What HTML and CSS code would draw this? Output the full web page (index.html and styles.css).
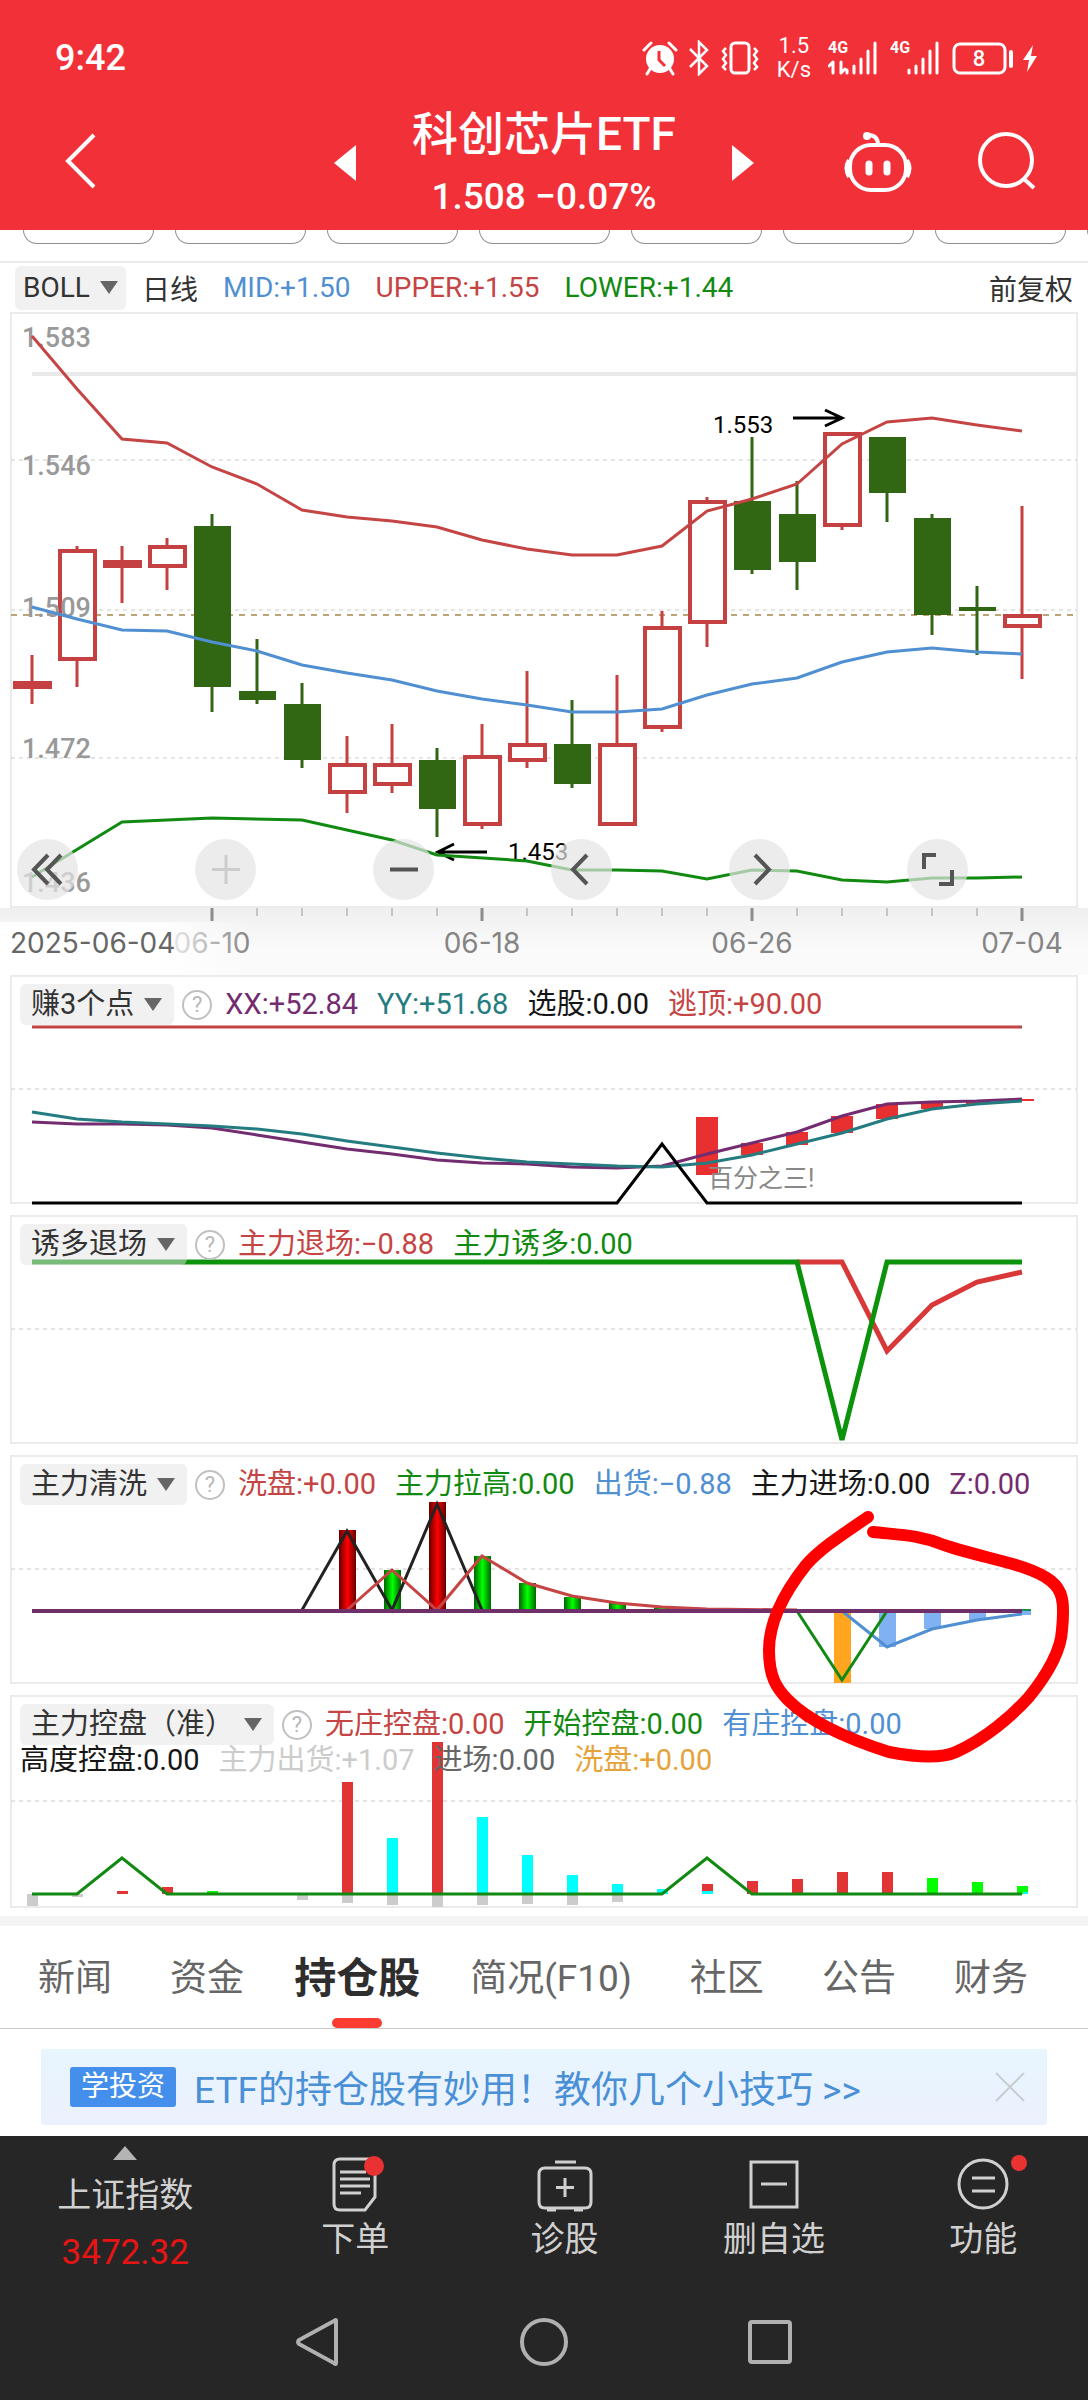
FILE: index.html
```html
<!DOCTYPE html>
<html lang="zh-CN">
<head>
<meta charset="utf-8">
<meta name="viewport" content="width=device-width, initial-scale=1">
<title>科创芯片ETF</title>
<link rel="stylesheet" href="styles.css">
</head>
<body>
<header class="top">
  <div class="status">
    <span class="clock">9:42</span>
    <div class="status-icons">
      <svg width="36" height="36" viewBox="0 0 36 36"><circle cx="18" cy="19" r="14" fill="#fff"/><path d="M2 10l7-7M34 10l-7-7M8 29l-3 5M28 29l3 5" stroke="#fff" stroke-width="3" stroke-linecap="round"/><path d="M17 11v9l6 6" fill="none" stroke="#f23038" stroke-width="3"/></svg>
      <svg width="22" height="36" viewBox="0 0 22 36"><path d="M2 9l17 17-8 8V2l8 8L2 27" fill="none" stroke="#fff" stroke-width="2.5"/></svg>
      <svg width="40" height="36" viewBox="0 0 40 36"><rect x="11" y="3" width="18" height="30" rx="4" fill="none" stroke="#fff" stroke-width="3"/><path d="M6 8l-3 3 3 4-3 4 3 4-3 4 3 3M34 8l3 3-3 4 3 4-3 4 3 4-3 3" fill="none" stroke="#fff" stroke-width="2.5"/></svg>
      <span class="speed"><span>1.5</span><span>K/s</span></span>
      <svg class="signal" width="52" height="40" viewBox="0 -4 52 40"><text x="0" y="13">4G</text><path d="M5 22v11M1 26l4-4M13 22v11M13 33l4-4M19 30v3M26 26v7M33 19v14M40 11v22M47 3v30" fill="none" stroke="#fff" stroke-width="3" stroke-linecap="round"/></svg>
      <svg class="signal" width="52" height="40" viewBox="0 -4 52 40"><text x="0" y="13">4G</text><path d="M19 30v3M26 26v7M33 19v14M40 11v22M47 3v30" fill="none" stroke="#fff" stroke-width="3" stroke-linecap="round"/></svg>
      <svg class="battery" width="86" height="36" viewBox="0 0 86 36"><rect x="2" y="4" width="51" height="29" rx="6" fill="none" stroke="#fff" stroke-width="3"/><path d="M59 12v14" stroke="#fff" stroke-width="4" stroke-linecap="round"/><text x="27" y="26" text-anchor="middle">8</text><path d="M81 5L71 20h6l-2 12 10-16h-6z" fill="#fff"/></svg>
    </div>
  </div>
  <nav class="titlebar">
    <button class="icon-btn back" aria-label="返回"><svg width="56" height="60" viewBox="0 0 56 60"><path d="M42 2L16 28l26 26" fill="none" stroke="#fff" stroke-width="4"/></svg></button>
    <div class="switcher">
      <button class="icon-btn" aria-label="上一只"><svg width="22" height="36" viewBox="0 0 22 36"><path d="M22 0v36L0 18z" fill="#fff"/></svg></button>
      <div class="heading"><h1>科创芯片ETF</h1><p>1.508 −0.07%</p></div>
      <button class="icon-btn" aria-label="下一只"><svg width="22" height="36" viewBox="0 0 22 36"><path d="M0 0v36l22-18z" fill="#fff"/></svg></button>
    </div>
    <div class="actions">
      <button class="icon-btn" aria-label="智能助手"><svg width="68" height="66" viewBox="0 0 68 66" fill="none" stroke="#fff"><rect x="6" y="15" width="56" height="45" rx="21" stroke-width="4"/><path d="M5 30q-5 8 0 17M63 30q5 8 0 17" stroke-width="4"/><path d="M34 15q0-10-10-10" stroke-width="4"/><circle cx="23" cy="6" r="4" fill="#fff" stroke="none"/><path d="M25 34v8M43 34v8" stroke-width="7" stroke-linecap="round"/></svg></button>
      <button class="icon-btn" aria-label="搜索"><svg width="58" height="64" viewBox="0 0 58 64"><circle cx="28" cy="29" r="26" fill="none" stroke="#fff" stroke-width="4"/><path d="M46 48l10 9" stroke="#fff" stroke-width="4"/></svg></button>
    </div>
  </nav>
</header>

<main>
  <div class="chips"><span></span><span></span><span></span><span></span><span></span><span></span><span></span><span></span></div>
  <div class="indicator">
    <button class="picker">BOLL<i class="caret"></i></button>
    <span>日线</span><span class="blue">MID:+1.50</span><span class="red">UPPER:+1.55</span><span class="green">LOWER:+1.44</span>
    <span class="adjust">前复权</span>
  </div>

  <section class="panel">
    <svg class="plot" viewBox="0 312 1088 663">
      <defs>
        <linearGradient id="axis" x2="0" y2="1"><stop offset="0" stop-color="#efefef"/><stop offset=".6" stop-color="#fafafa"/></linearGradient>
        <linearGradient id="fade"><stop offset="0" stop-color="#fff"/><stop offset=".66" stop-color="#fff" stop-opacity=".9"/><stop offset="1" stop-color="#fff" stop-opacity="0"/></linearGradient>
      </defs>
      <rect x="0" y="908" width="1088" height="67" fill="url(#axis)"/>
      <rect class="frame" x="11" y="313" width="1066" height="594"/>
      <path class="grid" d="M11 460H1077M11 610H1077M11 758H1077"/>
      <path d="M32 374H1077" stroke="#e9e9e9" stroke-width="4"/>
      <path d="M11 615H1077" stroke="#bda477" stroke-width="2" stroke-dasharray="6 6"/>
      <g class="up">
        <path d="M32 655V704M77 546V687M122 546V603M167 538V590M347 736V813M392 724V793M482 724V829M527 671V768M617 675V750M662 611V732M707 497V647M842 433V530M1022 506V679"/>
        <rect x="15" y="683" width="35" height="4"/><rect x="105" y="562" width="35" height="4"/>
        <rect x="60" y="551" width="35" height="108"/><rect x="150" y="547" width="35" height="19"/><rect x="330" y="765" width="35" height="27"/><rect x="375" y="765" width="35" height="19"/><rect x="465" y="757" width="35" height="67"/><rect x="510" y="745" width="35" height="15"/><rect x="600" y="745" width="35" height="79"/><rect x="645" y="628" width="35" height="99"/><rect x="690" y="502" width="35" height="120"/><rect x="825" y="434" width="35" height="91"/><rect x="1005" y="616" width="35" height="10"/>
      </g>
      <g class="down">
        <path d="M212 514V712M257 639V704M302 683V768M437 748V837M572 700V788M752 437V574M797 481V590M887 437V522M932 514V635M977 586V655"/>
        <rect x="194" y="526" width="37" height="161"/><rect x="239" y="691" width="37" height="9"/><rect x="284" y="704" width="37" height="56"/><rect x="419" y="760" width="37" height="49"/><rect x="554" y="744" width="37" height="40"/><rect x="734" y="501" width="37" height="69"/><rect x="779" y="514" width="37" height="48"/><rect x="869" y="437" width="37" height="56"/><rect x="914" y="518" width="37" height="97"/><rect x="959" y="607" width="37" height="4"/>
      </g>
      <g class="price"><text x="22" y="347">1.583</text><text x="22" y="475">1.546</text><text x="22" y="617">1.509</text><text x="22" y="758">1.472</text><text x="22" y="892">1.436</text></g>
      <g class="mark"><text x="713" y="433">1.553</text><text x="508" y="860">1.453</text><path d="M793 418H842M825 410L842 418L825 426M487 852H438M454 844L438 852L454 860"/></g>
      <polyline class="line red" points="32,336 77,389 122,439 167,443 212,467 257,484 302,510 347,517 392,521 437,527 482,540 527,549 572,555 617,555 662,546 707,511 752,499 797,484 842,444 887,422 932,418 977,425 1022,431"/>
      <polyline class="line blue" points="32,607 77,619 122,630 167,631 212,642 257,651 302,665 347,673 392,680 437,691 482,699 527,705 572,712 617,712 662,709 707,695 752,684 797,678 842,662 887,652 932,648 977,652 1022,654"/>
      <polyline class="line green" points="32,877 122,822 167,820 212,818 302,820 392,840 437,855 527,861 572,870 617,870 662,871 707,879 752,870 797,871 842,880 887,882 932,878 977,878 1022,877"/>
      <path d="M257 908v8M302 908v8M347 908v8M392 908v8M437 908v8M527 908v8M572 908v8M617 908v8M662 908v8M707 908v8M797 908v8M842 908v8M887 908v8M932 908v8M977 908v8" stroke="#c4c4c4" stroke-width="2"/>
      <path d="M212 908v13M482 908v13M752 908v13M1022 908v13" stroke="#8c8c8c" stroke-width="3"/>
      <g class="dates"><text x="212" y="953">06-10</text><text x="482" y="953">06-18</text><text x="752" y="953">06-26</text><text x="1022" y="953">07-04</text></g>
      <rect x="0" y="922" width="250" height="53" fill="url(#fade)"/>
      <text class="first-date" x="10" y="953">2025-06-04</text>
    </svg>
    <div class="controls">
      <button aria-label="最左"><svg width="61" height="61" viewBox="0 0 61 61"><path d="M31 16L17 30.500l14 14.500M44 16L30 30.500l14 14.500"/></svg></button>
      <button aria-label="放大" disabled><svg width="61" height="61" viewBox="0 0 61 61"><path d="M17 30.500h28M31 16v29"/></svg></button>
      <button aria-label="缩小"><svg width="61" height="61" viewBox="0 0 61 61"><path d="M17 30.500h28"/></svg></button>
      <button aria-label="左移"><svg width="61" height="61" viewBox="0 0 61 61"><path d="M36 16L22 30.500l14 14.500"/></svg></button>
      <button aria-label="右移"><svg width="61" height="61" viewBox="0 0 61 61"><path d="M26 16l14 14.500L26 45"/></svg></button>
      <button aria-label="全屏"><svg width="61" height="61" viewBox="0 0 61 61"><path d="M29 16H17v14M32 45h13V31"/></svg></button>
    </div>
  </section>

  <section class="panel">
    <svg class="plot" viewBox="0 975 1088 240">
      <rect class="frame" x="11" y="976" width="1066" height="227"/><path class="grid" d="M11 1089H1077"/>
      <path d="M32 1027H1022" stroke="#c24343" stroke-width="3"/>
      <path fill="#e93030" d="M696 1117h22v58h-22zM741 1143h22v12h-22zM786 1132h22v13h-22zM831 1116h22v17h-22zM876 1104h22v15h-22zM921 1102h22v7h-22zM966 1101h22v3h-22zM1012 1099h22v2h-22z"/>
      <polyline class="line purple" points="32,1122 77,1124 122,1124 167,1125 212,1128 257,1135 302,1142 347,1149 392,1154 437,1160 482,1163 527,1164 572,1167 617,1168 662,1166 707,1154 752,1143 797,1132 842,1116 887,1104 932,1102 977,1101 1022,1099"/>
      <polyline class="line teal" points="32,1112 77,1119 122,1122 167,1124 212,1126 257,1129 302,1134 347,1141 392,1147 437,1153 482,1158 527,1162 572,1164 617,1166 662,1167 707,1163 752,1155 797,1144 842,1133 887,1119 932,1109 977,1104 1022,1101"/>
      <text class="note" x="708" y="1187">百分之三!</text>
      <path d="M32 1203H617L662 1144L707 1203H1022" fill="none" stroke="#000" stroke-width="3"/>
    </svg>
    <div class="legend"><button class="picker">赚3个点<i class="caret"></i></button><button class="help" aria-label="说明">?</button><span class="purple">XX:+52.84</span><span class="teal">YY:+51.68</span><span class="black">选股:0.00</span><span class="red">逃顶:+90.00</span></div>
  </section>

  <section class="panel">
    <svg class="plot" viewBox="0 1215 1088 240">
      <rect class="frame" x="11" y="1216" width="1066" height="227"/><path class="grid" d="M11 1329H1077"/>
      <path d="M797 1262H842L887 1351L932 1305L977 1282L1022 1272" fill="none" stroke="#d83838" stroke-width="5"/>
      <path d="M32 1262H797L842 1440L887 1262H1022" fill="none" stroke="#0c930c" stroke-width="5"/>
    </svg>
    <div class="legend"><button class="picker">诱多退场<i class="caret"></i></button><button class="help" aria-label="说明">?</button><span class="red">主力退场:−0.88</span><span class="green">主力诱多:0.00</span></div>
  </section>

  <div class="annotated">
  <section class="panel">
    <svg class="plot" viewBox="0 1455 1088 240">
      <defs>
        <linearGradient id="r"><stop offset="0" stop-color="#600"/><stop offset=".5" stop-color="#f00"/><stop offset="1" stop-color="#600"/></linearGradient>
        <linearGradient id="g"><stop offset="0" stop-color="#060"/><stop offset=".5" stop-color="#0f0"/><stop offset="1" stop-color="#060"/></linearGradient>
      </defs>
      <rect class="frame" x="11" y="1456" width="1066" height="227"/><path class="grid" d="M11 1569H1077"/>
      <g fill="url(#r)"><rect x="339" y="1530" width="17" height="80"/><rect x="429" y="1502" width="17" height="108"/></g>
      <g fill="url(#g)"><rect x="384" y="1570" width="17" height="40"/><rect x="474" y="1556" width="17" height="54"/><rect x="519" y="1583" width="17" height="27"/><rect x="564" y="1597" width="17" height="13"/><rect x="609" y="1603" width="17" height="7"/><rect x="654" y="1608" width="17" height="2"/></g>
      <rect x="834" y="1611" width="17" height="72" fill="#ffa520"/>
      <path fill="#80b1f3" d="M879 1611h17v36h-17zM924 1611h17v18h-17zM969 1611h17v9h-17zM1022 1611h9v4h-9z"/>
      <path d="M302 1610L347 1531L392 1610L437 1504L482 1610" fill="none" stroke="#222" stroke-width="3"/>
      <polyline class="thin red" points="347,1610 392,1570 437,1610 482,1556 527,1583 572,1596 617,1603 662,1607 707,1609 797,1610"/>
      <polyline class="thin blue" points="842,1611 887,1647 932,1629 977,1620 1022,1614"/>
      <polyline class="thin green" points="797,1611 842,1680 887,1611"/>
      <path d="M32 1611H1022" stroke="#6f2f68" stroke-width="4"/><path d="M1022 1610h9" stroke="#1a9050" stroke-width="2"/>
    </svg>
    <div class="legend"><button class="picker">主力清洗<i class="caret"></i></button><button class="help" aria-label="说明">?</button><span class="red">洗盘:+0.00</span><span class="green">主力拉高:0.00</span><span class="blue">出货:−0.88</span><span class="black">主力进场:0.00</span><span class="purple">Z:0.00</span></div>
  </section>

  <section class="panel">
    <svg class="plot" viewBox="0 1695 1088 221">
      <rect class="frame" x="11" y="1696" width="1066" height="211"/><path class="grid" d="M11 1801H1077"/>
      <path fill="#ccc" d="M27 1894h11v12h-11zM72 1894h11v3h-11zM297 1894h11v6h-11zM342 1894h11v9h-11zM387 1894h11v11h-11zM432 1894h11v13h-11zM477 1894h11v11h-11zM522 1894h11v10h-11zM567 1894h11v11h-11zM612 1894h11v8h-11z"/>
      <path fill="#e13434" d="M117 1891h11v3h-11zM162 1887h11v7h-11zM342 1782h11v112h-11zM432 1742h11v152h-11zM702 1884h11v7h-11zM747 1881h11v13h-11zM792 1879h11v15h-11zM837 1872h11v22h-11zM882 1872h11v22h-11z"/>
      <path fill="#0f0" d="M207 1891h11v3h-11zM927 1878h11v16h-11zM972 1882h11v12h-11zM1017 1886h11v8h-11z"/>
      <path fill="#0ff" d="M387 1838h11v56h-11zM477 1817h11v77h-11zM522 1855h11v39h-11zM567 1875h11v19h-11zM612 1884h11v10h-11zM657 1889h11v5h-11zM702 1891h11v3h-11zM1023 1892h5v2h-5z"/>
      <polyline class="thin green" points="32,1894 77,1894 122,1858 167,1894 662,1894 707,1858 752,1894 1022,1894"/>
    </svg>
    <div class="legend"><button class="picker">主力控盘（准）<i class="caret"></i></button><button class="help" aria-label="说明">?</button><span class="red">无庄控盘:0.00</span><span class="green">开始控盘:0.00</span><span class="blue">有庄控盘:0.00</span>
      <div class="second"><span class="black">高度控盘:0.00</span><span class="silver">主力出货:+1.07</span><span class="grey">进场:0.00</span><span class="orange">洗盘:+0.00</span></div>
    </div>
  </section>
  <svg class="scribble" viewBox="0 1455 1088 461"><path d="M868 1517C845 1533 822 1547 806 1565C787 1589 769 1618 769 1650C769 1676 776 1688 788 1700C808 1720 845 1738 889 1752C920 1758 943 1758 956 1752C985 1739 1012 1716 1029 1697C1047 1675 1061 1650 1062 1630C1065 1600 1062 1590 1051 1581C1030 1564 985 1559 944 1545C920 1535 902 1535 873 1532"/></svg>
  </div>

  <nav class="tabs">
    <a href="#news">新闻</a><a href="#funds">资金</a><a href="#holdings" class="active" aria-current="page">持仓股</a><a href="#profile">简况(F10)</a><a href="#community">社区</a><a href="#notices">公告</a><a href="#finance">财务</a>
  </nav>
  <div class="tip">
    <span class="tag">学投资</span><a href="#tips">ETF的持仓股有妙用！教你几个小技巧 &gt;&gt;</a>
    <button class="icon-btn" aria-label="关闭"><svg width="30" height="30" viewBox="0 0 30 30"><path d="M1 1l28 28M29 1L1 29" stroke="#c9cdd2" stroke-width="2"/></svg></button>
  </div>
</main>

<footer>
  <div class="toolbar">
    <button class="index"><svg width="24" height="14" viewBox="0 0 24 14"><path d="M12 0l12 14H0z" fill="#b4b4b4"/></svg><span>上证指数</span><b>3472.32</b></button>
    <button><svg width="80" height="64" viewBox="0 0 80 64"><path d="M25 7h28q7 0 7 7v31l-10 13H25q-6 0-6-6V13q0-6 6-6zM25 20h26M25 27h30M25 34h30M25 41h21"/><circle cx="59" cy="14" r="10" class="dot"/></svg><span>下单</span></button>
    <button><svg width="80" height="64" viewBox="0 0 80 64"><path d="M20 16h40q6 0 6 6v28q0 6-6 6H20q-6 0-6-6V22q0-6 6-6zM30 10h21M40 26v19M31 35.500h18M22 58h9M49 58h9"/></svg><span>诊股</span></button>
    <button><svg width="80" height="64" viewBox="0 0 80 64"><path d="M17 10h46v45H17zM27 32h26"/></svg><span>删自选</span></button>
    <button><svg width="90" height="64" viewBox="0 0 90 64"><circle cx="45" cy="32" r="24"/><path d="M34 26h23M34 39h23"/><circle cx="81" cy="11" r="8" class="dot"/></svg><span>功能</span></button>
  </div>
  <div class="system">
    <button aria-label="返回"><svg width="48" height="48" viewBox="0 0 48 48"><path d="M42 3v42q0 2-2 0L5 26q-2-2 0-4L40 3q2-2 2 0z"/></svg></button>
    <button aria-label="主页"><svg width="48" height="48" viewBox="0 0 48 48"><circle cx="24" cy="24" r="22"/></svg></button>
    <button aria-label="最近任务"><svg width="48" height="48" viewBox="0 0 48 48"><rect x="4" y="4" width="40" height="40" rx="2"/></svg></button>
  </div>
</footer>
</body>
</html>
```
FILE: styles.css
```css
* { box-sizing: border-box; }
body {
  margin: 0;
  background: #fff;
  color: #333;
  font-family: Roboto, "Noto Sans CJK SC", sans-serif;
}
button {
  margin: 0;
  padding: 0;
  border: 0;
  background: none;
  color: inherit;
  font: inherit;
}
svg { display: block; }
h1, p { margin: 0; }
a { color: inherit; text-decoration: none; }

.top { background: #f23038; color: #fff; }
.status {
  display: flex;
  align-items: center;
  justify-content: space-between;
  height: 100px;
  padding: 15px 50px 0 55px;
}
.clock { font-size: 36px; font-weight: 500; }
.status-icons { display: flex; align-items: center; gap: 10px; }
.speed {
  display: flex;
  flex-direction: column;
  margin: 0 7px;
  font-size: 22px;
  line-height: 24px;
  text-align: center;
}
.signal { margin-bottom: 4px; }
.signal text { fill: #fff; font-size: 16px; font-weight: 700; }
.battery text { fill: #fff; font-size: 22px; font-weight: 500; }
.titlebar {
  display: grid;
  grid-template-columns: 1fr auto 1fr;
  align-items: center;
  height: 130px;
  padding: 0 52px 10px;
}
.back { justify-self: start; }
.switcher { display: flex; align-items: center; align-self: start; }
.heading { width: 376px; text-align: center; }
.heading h1 { font-size: 46px; font-weight: 500; line-height: 68px; }
.heading p { font-size: 37px; font-weight: 500; line-height: 58px; }
.actions { display: flex; align-items: center; justify-content: flex-end; gap: 66px; }

.chips {
  display: flex;
  gap: 21px;
  height: 33px;
  padding-left: 23px;
  overflow: hidden;
  border-bottom: 2px solid #ebebeb;
}
.chips span {
  flex: none;
  width: 131px;
  height: 14px;
  border: 1px solid #8e8e8e;
  border-top: 0;
  border-radius: 0 0 14px 14px;
}
.indicator {
  display: flex;
  align-items: center;
  gap: 25px;
  height: 49px;
  padding: 0 15px;
  font-size: 28px;
}
.indicator .picker { height: 44px; padding: 0 8px; margin-right: -9px; }
.adjust { margin-left: auto; }
.picker {
  display: flex;
  align-items: center;
  gap: 10px;
  height: 41px;
  padding: 0 12px 0 11px;
  border-radius: 6px;
  background: rgba(227, 227, 227, .5);
}
.caret {
  border: 9px solid transparent;
  border-top: 13px solid #666;
  border-bottom: 0;
}

.panel { display: grid; }
.panel > * { grid-area: 1 / 1; }
.plot { width: 100%; height: auto; }
.frame { fill: none; stroke: #ebebeb; stroke-width: 2; }
.grid { fill: none; stroke: #e4e4e4; stroke-width: 2; stroke-dasharray: 4 4; }
.up { fill: #fff; stroke: #c54040; stroke-width: 4; }
.up path { stroke-width: 3; }
.down { fill: #316613; }
.down path { stroke: #316613; stroke-width: 3; }
.line { fill: none; stroke: currentColor; stroke-width: 3; }
.thin { fill: none; stroke: currentColor; stroke-width: 3; }
.price { fill: #999; font-size: 27px; font-weight: 500; }
.mark { fill: #000; font-size: 24px; }
.mark path { fill: none; stroke: #000; stroke-width: 3; }
.dates, .first-date { font-family: Inter, sans-serif; font-size: 28px; }
.dates { fill: #858585; text-anchor: middle; }
.first-date { fill: #666; }
.note { fill: #888; font-size: 25px; }

.controls {
  display: flex;
  align-self: end;
  justify-content: space-between;
  margin: 0 120px 75px 17px;
}
.controls button {
  width: 61px;
  height: 61px;
  border-radius: 50%;
  background: rgba(228, 228, 228, .7);
}
.controls path { fill: none; stroke: #555; stroke-width: 4; }
.controls button:disabled path { stroke: #ccc; stroke-width: 3; }

.legend {
  display: flex;
  flex-wrap: wrap;
  align-items: center;
  align-content: flex-start;
  column-gap: 19px;
  padding: 9px 20px 0;
  font-size: 29px;
  line-height: 41px;
}
.help {
  width: 30px;
  height: 30px;
  margin: 0 -6px 0 -11px;
  border: 2px solid #c0c0c0;
  border-radius: 50%;
  color: #b8b8b8;
  font-size: 22px;
  line-height: 26px;
}
.second { display: flex; gap: 19px; width: 100%; line-height: 30px; }

.red { color: #c54444; }
.green { color: #128a12; }
.blue { color: #4f8fd2; }
.purple { color: #742c70; }
.teal { color: #247c80; }
.black { color: #161616; }
.grey { color: #666; }
.silver { color: #ccc; }
.orange { color: #e5a33a; }

.annotated { position: relative; }
.scribble {
  position: absolute;
  inset: 0;
  width: 100%;
  height: 100%;
  pointer-events: none;
}
.scribble path {
  fill: none;
  stroke: #f00;
  stroke-width: 12;
  stroke-linecap: round;
}

.tabs {
  display: flex;
  align-items: stretch;
  justify-content: space-between;
  height: 113px;
  padding: 0 60px 0 38px;
  border-top: 10px solid #f4f4f4;
  border-bottom: 1px solid #c8c8c8;
  color: #666;
  font-size: 37px;
  line-height: 106px;
}
.tabs .active {
  position: relative;
  margin: 0 -8px;
  color: #2e2e2e;
  font-size: 42px;
  font-weight: 700;
}
.active::after {
  content: "";
  position: absolute;
  bottom: 0;
  left: calc(50% - 25px);
  width: 50px;
  height: 10px;
  border-radius: 5px;
  background: #fa3c32;
}
.tip {
  display: flex;
  align-items: center;
  gap: 18px;
  height: 76px;
  margin: 20px 41px 11px;
  padding: 0 22px 0 29px;
  border-radius: 3px;
  background: linear-gradient(#e7f5fe, #ecf1fd);
  color: #4a90d6;
  font-size: 37px;
}
.tag {
  padding: 0 11px;
  border-radius: 3px;
  background: #448fec;
  color: #fff;
  font-size: 28px;
  line-height: 40px;
}
.tip .icon-btn { margin-left: auto; }

footer { background: #262626; color: #d0d0d0; }
.toolbar {
  display: grid;
  grid-template-columns: 250fr 209fr 209fr 209fr 209fr;
  height: 148px;
  font-size: 34px;
}
.toolbar button {
  display: flex;
  flex-direction: column;
  align-items: center;
  padding-top: 16px;
  line-height: 46px;
}
.toolbar .index { padding-top: 10px; line-height: 58px; }
.index span { margin-top: 6px; }
.index b { color: #e81414; font-size: 35px; font-weight: 400; }
.toolbar button:not(.index) svg { fill: none; stroke: #d0d0d0; stroke-width: 3; }
.toolbar .dot { fill: #e93232; stroke: none; }
.system {
  display: flex;
  align-items: center;
  justify-content: center;
  gap: 178px;
  height: 116px;
}
.system svg { fill: none; stroke: #b0b0b0; stroke-width: 4; }
```
